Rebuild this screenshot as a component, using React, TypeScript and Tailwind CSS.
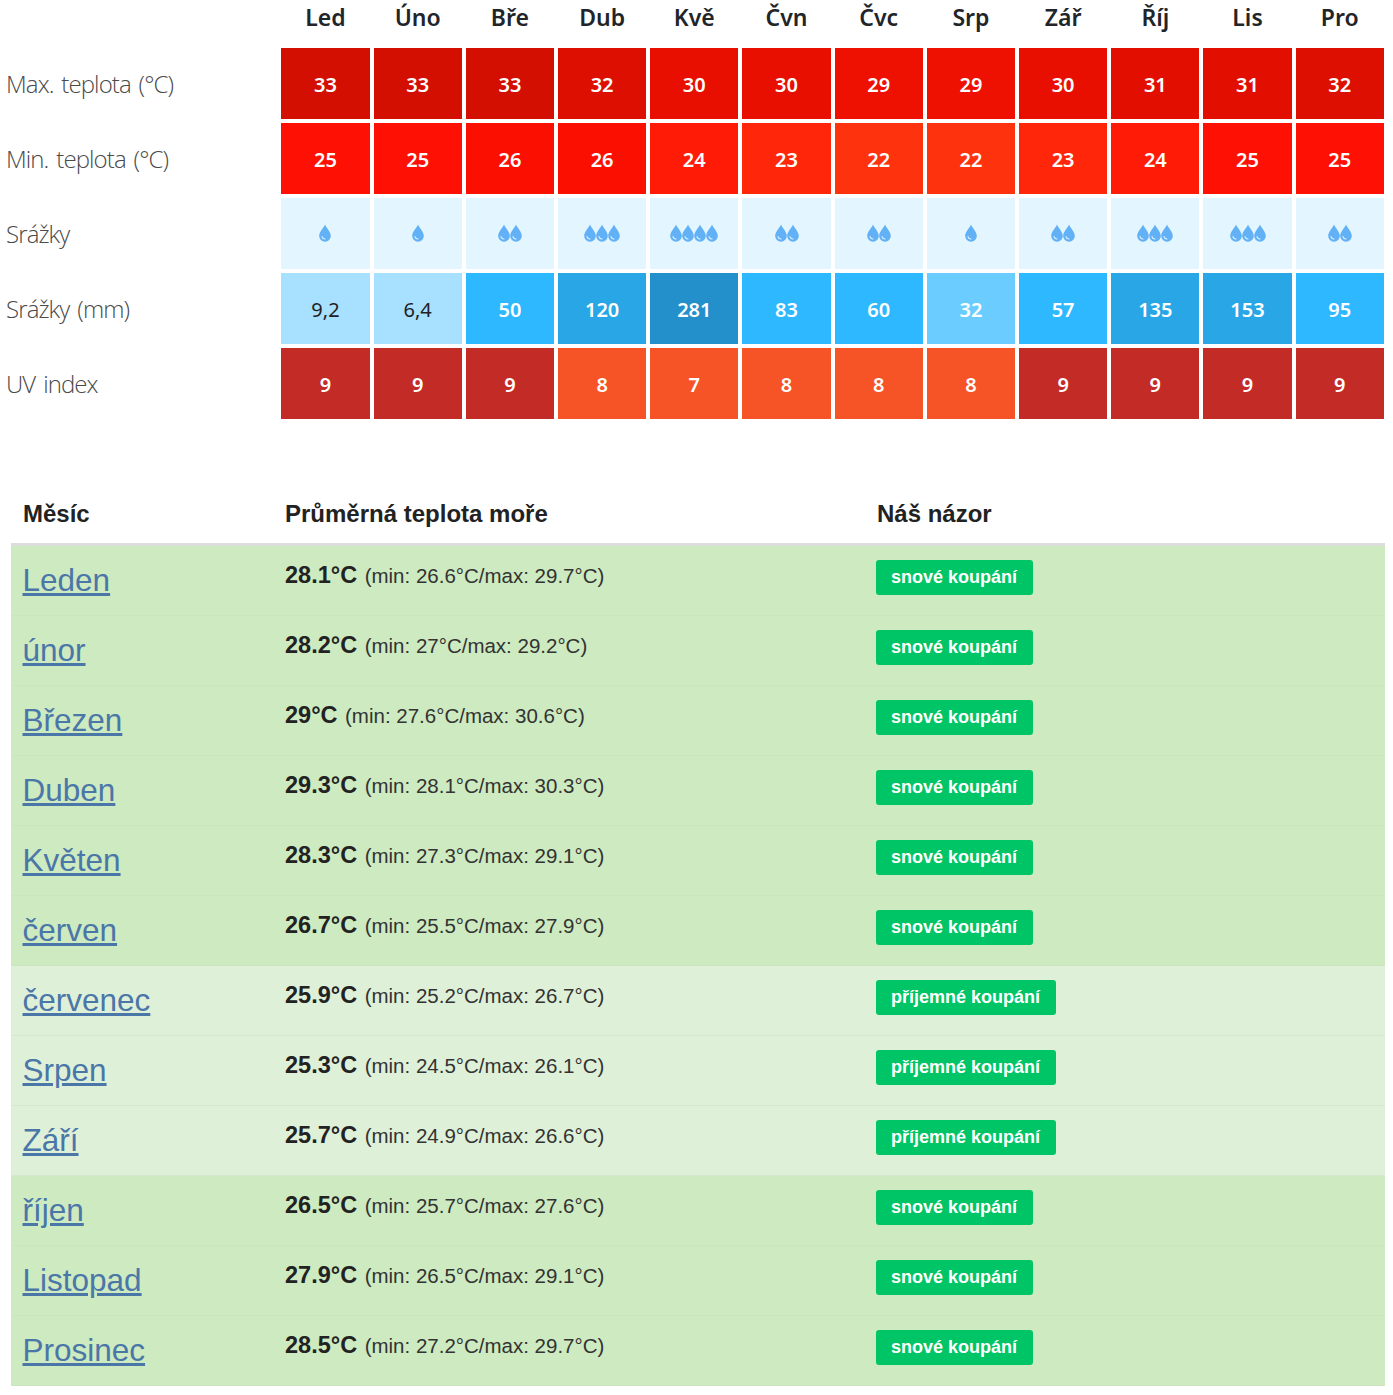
const months = ['Led', 'Úno', 'Bře', 'Dub', 'Kvě', 'Čvn', 'Čvc', 'Srp', 'Zář', 'Říj', 'Lis', 'Pro'];

const maxTemp = [
  { v: '33', c: 'bg-[#d20f00]' }, { v: '33', c: 'bg-[#d20f00]' }, { v: '33', c: 'bg-[#d20f00]' },
  { v: '32', c: 'bg-[#dc0f00]' }, { v: '30', c: 'bg-[#e80f00]' }, { v: '30', c: 'bg-[#e80f00]' },
  { v: '29', c: 'bg-[#ee1000]' }, { v: '29', c: 'bg-[#ee1000]' }, { v: '30', c: 'bg-[#e80f00]' },
  { v: '31', c: 'bg-[#e20f00]' }, { v: '31', c: 'bg-[#e20f00]' }, { v: '32', c: 'bg-[#dc0f00]' },
];

const minTemp = [
  { v: '25', c: 'bg-[#ff1004]' }, { v: '25', c: 'bg-[#ff1004]' }, { v: '26', c: 'bg-[#fb0f00]' },
  { v: '26', c: 'bg-[#fb0f00]' }, { v: '24', c: 'bg-[#ff1b06]' }, { v: '23', c: 'bg-[#ff260a]' },
  { v: '22', c: 'bg-[#ff320e]' }, { v: '22', c: 'bg-[#ff320e]' }, { v: '23', c: 'bg-[#ff260a]' },
  { v: '24', c: 'bg-[#ff1b06]' }, { v: '25', c: 'bg-[#ff1004]' }, { v: '25', c: 'bg-[#ff1004]' },
];

const drops = [1, 1, 2, 3, 4, 2, 2, 1, 2, 3, 3, 2];

const rain = [
  { v: '9,2', c: 'bg-[#a8e0ff] text-[#222222] font-normal' }, { v: '6,4', c: 'bg-[#a8e0ff] text-[#222222] font-normal' },
  { v: '50', c: 'bg-[#2db8ff]' }, { v: '120', c: 'bg-[#29a6e6]' },
  { v: '281', c: 'bg-[#2490cb]' }, { v: '83', c: 'bg-[#2db8ff]' },
  { v: '60', c: 'bg-[#2db8ff]' }, { v: '32', c: 'bg-[#6bcdff]' },
  { v: '57', c: 'bg-[#2db8ff]' }, { v: '135', c: 'bg-[#29a6e6]' },
  { v: '153', c: 'bg-[#29a6e6]' }, { v: '95', c: 'bg-[#2db8ff]' },
];

const uv = [
  { v: '9', c: 'bg-[#c32b27]' }, { v: '9', c: 'bg-[#c32b27]' }, { v: '9', c: 'bg-[#c32b27]' },
  { v: '8', c: 'bg-[#f65326]' }, { v: '7', c: 'bg-[#f65326]' }, { v: '8', c: 'bg-[#f65326]' },
  { v: '8', c: 'bg-[#f65326]' }, { v: '8', c: 'bg-[#f65326]' }, { v: '9', c: 'bg-[#c32b27]' },
  { v: '9', c: 'bg-[#c32b27]' }, { v: '9', c: 'bg-[#c32b27]' }, { v: '9', c: 'bg-[#c32b27]' },
];

const sea = [
  { month: 'Leden', avg: '28.1°C', range: '(min: 26.6°C/max: 29.7°C)', best: true },
  { month: 'únor', avg: '28.2°C', range: '(min: 27°C/max: 29.2°C)', best: true },
  { month: 'Březen', avg: '29°C', range: '(min: 27.6°C/max: 30.6°C)', best: true },
  { month: 'Duben', avg: '29.3°C', range: '(min: 28.1°C/max: 30.3°C)', best: true },
  { month: 'Květen', avg: '28.3°C', range: '(min: 27.3°C/max: 29.1°C)', best: true },
  { month: 'červen', avg: '26.7°C', range: '(min: 25.5°C/max: 27.9°C)', best: true },
  { month: 'červenec', avg: '25.9°C', range: '(min: 25.2°C/max: 26.7°C)', best: false },
  { month: 'Srpen', avg: '25.3°C', range: '(min: 24.5°C/max: 26.1°C)', best: false },
  { month: 'Září', avg: '25.7°C', range: '(min: 24.9°C/max: 26.6°C)', best: false },
  { month: 'říjen', avg: '26.5°C', range: '(min: 25.7°C/max: 27.6°C)', best: true },
  { month: 'Listopad', avg: '27.9°C', range: '(min: 26.5°C/max: 29.1°C)', best: true },
  { month: 'Prosinec', avg: '28.5°C', range: '(min: 27.2°C/max: 29.7°C)', best: true },
];

function Drop() {
  return (
    <svg viewBox="0 0 12 18" className="w-3 h-[18px] shrink-0">
      <path d="M6 0.5C7 3.5 11.8 7.5 11.8 12A5.8 5.8 0 0 1 0.2 12C0.2 7.5 5 3.5 6 0.5Z" fill="#62b0f6" />
      <path d="M3 12.5A3.2 3.2 0 0 0 6 15" fill="none" stroke="#e3f5ff" strokeWidth="1.1" strokeLinecap="round" />
    </svg>
  );
}

function Label({ text }: { text: string }) {
  return <div className="pl-[6px] flex items-center text-[24px] font-light text-[#4a4a4a] font-['Open_Sans',sans-serif] tracking-[-0.9px] [word-spacing:2.5px]">{text}</div>;
}

function Cell({ v, c }: { v: string; c: string }) {
  return <div className={`flex items-center justify-center pt-[2px] text-[20px] ${c.includes('text-') ? c : `${c} text-white font-semibold`}`}>{v}</div>;
}

export default function App() {
  return (
    <div className="bg-white w-[1393px] h-[1395px] overflow-hidden">
      <div className="grid grid-cols-[277.4px_repeat(12,88.21px)] grid-rows-[44px_repeat(5,71px)] gap-1 font-['Noto_Sans',sans-serif]">
        <div />
        {months.map((m) => (
          <div key={m} className="pb-[10px] flex items-center justify-center text-[23px] font-semibold text-[#212529]">{m}</div>
        ))}

        <Label text="Max. teplota (°C)" />
        {maxTemp.map((d, i) => <Cell key={i} {...d} />)}

        <Label text="Min. teplota (°C)" />
        {minTemp.map((d, i) => <Cell key={i} {...d} />)}

        <Label text="Srážky" />
        {drops.map((n, i) => (
          <div key={i} className="bg-[#e3f5ff] flex items-center justify-center pb-[2px]">
            {Array.from({ length: n }).map((_, j) => <Drop key={j} />)}
          </div>
        ))}

        <Label text="Srážky (mm)" />
        {rain.map((d, i) => <Cell key={i} {...d} />)}

        <Label text="UV index" />
        {uv.map((d, i) => <Cell key={i} {...d} />)}
      </div>

      <div className="mt-[60px] mx-[11px] w-[1374px] font-['Liberation_Sans',sans-serif] text-[#222222]">
        <div className="grid grid-cols-[262px_592px_1fr] h-[67px] border-b-[3px] border-[#dddddd] text-[24px] font-bold">
          <div className="pl-3 pt-[17px]">Měsíc</div>
          <div className="pl-3 pt-[17px]">Průměrná teplota moře</div>
          <div className="pl-3 pt-[17px]">Náš názor</div>
        </div>
        {sea.map((r) => (
          <div key={r.month} className={`grid grid-cols-[262px_592px_1fr] h-[70px] border-b ${r.best ? 'bg-[#cdeac0] border-[#cbe6be]' : 'bg-[#dff0d8] border-[#d6e6cf]'}`}>
            <div className="pl-[11.5px] pt-[14px]">
              <a href="#" className="text-[31.5px] leading-[40px] text-[#4a76a8] underline">{r.month}</a>
            </div>
            <div className="pl-3 pt-[14px] leading-[30px]">
              <span className="text-[23.5px] font-bold">{r.avg} </span>
              <span className="ml-[1px] text-[20.5px] text-[#333333]">{r.range}</span>
            </div>
            <div className="pl-[11px] pt-[14px]">
              <span className="inline-flex items-center h-[35px] pl-[15px] pr-[16px] rounded-[3px] bg-[#00c566] text-white text-[18px] font-bold">
                {r.best ? 'snové koupání' : 'příjemné koupání'}
              </span>
            </div>
          </div>
        ))}
      </div>
    </div>
  );
}
